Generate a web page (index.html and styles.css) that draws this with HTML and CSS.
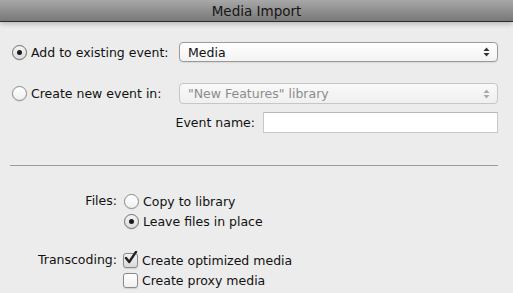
FILE: index.html
```html
<!DOCTYPE html>
<html>
<head>
<meta charset="utf-8">
<link rel="stylesheet" href="styles.css">
</head>
<body>
<div class="titlebar">Media Import</div>
<div class="content">
  <div class="row">
    <label class="choice lead"><span class="radio on"></span>Add to existing event:</label>
    <div class="popup"><span>Media</span><span class="arrows"><svg width="7" height="10" viewBox="0 0 7 10"><path d="M3.5 0.5 L6.5 4 L0.5 4 Z M0.5 6 L6.5 6 L3.5 9.5 Z" fill="#333"/></svg></span></div>
  </div>
  <div class="row row2">
    <label class="choice lead"><span class="radio"></span>Create new event in:</label>
    <div class="popup disabled"><span>"New Features" library</span><span class="arrows"><svg width="7" height="10" viewBox="0 0 7 10"><path d="M3.5 0.5 L6.5 4 L0.5 4 Z M0.5 6 L6.5 6 L3.5 9.5 Z" fill="#aaa"/></svg></span></div>
  </div>
  <div class="row row3">
    <span class="fieldlabel">Event name:</span>
    <div class="textfield"></div>
  </div>
  <div class="separator"></div>
  <div class="options">
    <div class="optlabel">Files:</div>
    <div class="optvals">
      <label class="choice"><span class="radio"></span>Copy to library</label>
      <label class="choice"><span class="radio on"></span>Leave files in place</label>
    </div>
    <div class="optlabel trans">Transcoding:</div>
    <div class="optvals trans">
      <label class="choice"><span class="check on"><svg width="15" height="15" viewBox="0 0 15 15"><path d="M3 7 L6.2 11 L13 0.8" fill="none" stroke="#222" stroke-width="2.4" stroke-linecap="round" stroke-linejoin="round"/></svg></span>Create optimized media</label>
      <label class="choice"><span class="check"></span>Create proxy media</label>
    </div>
  </div>
</div>
</body>
</html>
```
FILE: styles.css
```css
html, body {
  margin: 0;
  padding: 0;
}
body {
  background: #ececec;
  font-family: "DejaVu Sans", "Liberation Sans", sans-serif;
  font-size: 12.5px;
  color: #111;
  width: 513px;
  height: 293px;
  overflow: hidden;
}
.titlebar {
  height: 21px;
  line-height: 22px;
  text-align: center;
  font-size: 13.5px;
  color: #151515;
  background: linear-gradient(#a8a8a8, #787878);
  border-bottom: 1px solid #2c2c2c;
  box-shadow: 0 2px 5px rgba(0,0,0,0.22);
  position: relative;
}
.content {
  padding: 20px 15px 0 12px;
}
.row {
  display: flex;
  align-items: center;
  height: 20px;
}
.row2 {
  margin-top: 21px;
  height: 21px;
}
.row3 {
  margin-top: 8px;
  height: 21px;
  justify-content: flex-end;
}
.choice {
  display: flex;
  align-items: center;
  height: 20px;
  white-space: nowrap;
}
.lead {
  width: 167px;
  flex: none;
}
.radio {
  width: 13px;
  height: 13px;
  border: 1px solid #8a8a8a;
  border-radius: 50%;
  background: linear-gradient(#ffffff, #f0f0f0);
  margin-right: 4px;
  box-sizing: content-box;
  display: flex;
  align-items: center;
  justify-content: center;
  flex: none;
  box-shadow: 0 0.5px 1px rgba(0,0,0,0.12);
}
.radio.on {
  background: linear-gradient(#f4f4f4, #dcdcdc);
  border-color: #6e6e6e;
}
.radio.on::after {
  content: "";
  width: 5px;
  height: 5px;
  border-radius: 50%;
  background: #1a1a1a;
}
.check {
  width: 13px;
  height: 13px;
  border: 1px solid #8a8a8a;
  border-radius: 3px;
  background: linear-gradient(#ffffff, #f0f0f0);
  margin-right: 4px;
  flex: none;
  position: relative;
  box-shadow: 0 0.5px 1px rgba(0,0,0,0.12);
}
.check.on {
  background: linear-gradient(#f2f2f2, #dadada);
}
.check svg {
  position: absolute;
  left: -1px;
  top: -3px;
}
.popup {
  flex: 1;
  height: 18px;
  border: 1px solid #9a9a9a;
  border-radius: 4px;
  background: linear-gradient(#ffffff, #f3f3f3);
  display: flex;
  align-items: center;
  justify-content: space-between;
  padding: 0 7px 0 8px;
  box-shadow: 0 1px 1px rgba(0,0,0,0.08);
}
.row2 .popup {
  height: 19px;
}
.popup.disabled {
  border-color: #c6c6c6;
  color: #8c8c8c;
  background: linear-gradient(#f9f9f9, #f0f0f0);
  box-shadow: none;
}
.arrows {
  display: flex;
  align-items: center;
}
.fieldlabel {
  margin-right: 8px;
}
.textfield {
  width: 233px;
  height: 19px;
  background: #fff;
  border: 1px solid #c8c8c8;
  border-top-color: #b8b8b8;
}
.separator {
  margin: 32px 0 0 -2px;
  height: 1px;
  background: #9c9c9c;
}
.options {
  display: grid;
  grid-template-columns: 105px auto;
  column-gap: 7px;
  margin-top: 25px;
}
.optlabel {
  text-align: right;
  height: 20px;
  line-height: 20px;
}
.optlabel.trans,
.optvals.trans {
  margin-top: 19px;
}
.optvals.trans {
  margin-left: -1px;
}
```
